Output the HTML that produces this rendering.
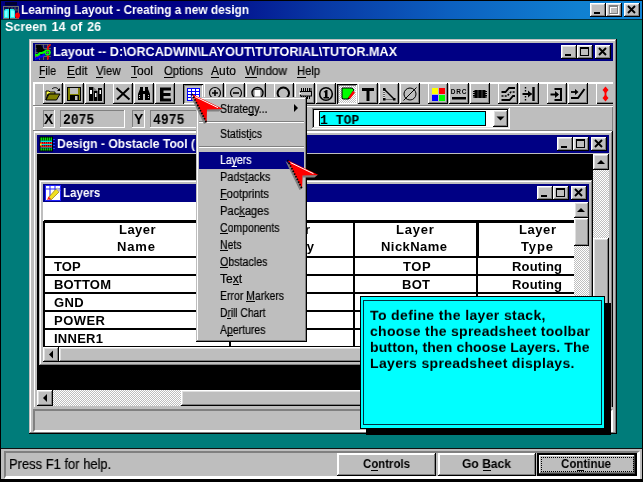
<!DOCTYPE html>
<html><head><meta charset="utf-8"><title>Learning Layout - Creating a new design</title>
<style>
html,body{margin:0;padding:0;background:#007c7a;}
body{width:643px;height:482px;overflow:hidden;font-family:"Liberation Sans",sans-serif;}
#root{position:relative;width:643px;height:482px;overflow:hidden;background:#007c7a;}
.a{position:absolute;box-sizing:border-box;}
.t{will-change:transform;position:absolute;white-space:pre;transform-origin:0 0;font-family:"Liberation Sans",sans-serif;}
.g{background:#bebebe;}
.rs{box-shadow:inset -1px -1px #000,inset 1px 1px #fff,inset -2px -2px #808080,inset 2px 2px #dfdfdf;background:#bebebe;}
.r1{box-shadow:inset -1px -1px #808080,inset 1px 1px #fff;background:#bebebe;}
.rb{box-shadow:inset -1px -1px #000,inset 1px 1px #fff,inset -2px -2px #808080;background:#bebebe;}
.sk{box-shadow:inset -1px -1px #fff,inset 1px 1px #808080,inset -2px -2px #dfdfdf,inset 2px 2px #000;}
.s1{box-shadow:inset -1px -1px #fff,inset 1px 1px #808080;}
.win{box-shadow:inset -1px -1px #000,inset 1px 1px #bebebe,inset -2px -2px #808080,inset 2px 2px #fff;background:#bebebe;}
.nv{background:#000084;}
.chk{background-image:conic-gradient(#fff 25%,#bebebe 0 50%,#fff 0 75%,#bebebe 0);background-size:2px 2px;}
u{text-decoration:underline;text-underline-offset:1px;}
svg{position:absolute;overflow:visible;}

</style></head>
<body>
<div id="root">
<div class="a " style="left:0px;top:0px;width:643px;height:482px;background:#007c7a;"></div>
<div class="a " style="left:0px;top:0px;width:643px;height:1px;background:#000;"></div>
<div class="a " style="left:0px;top:0px;width:1px;height:482px;background:#000;"></div>
<div class="a " style="left:1px;top:1px;width:641px;height:18px;background:linear-gradient(90deg,#000084 0%,#000084 28%,#0838a4 50%,#0c60c0 70%,#1080d0 90%,#1084d4 100%);"></div>
<div class="a " style="left:1px;top:19px;width:641px;height:1px;background:#003038;"></div>
<div class="a " style="left:642px;top:0px;width:1px;height:482px;background:#000;"></div>
<svg style="left:3px;top:2px" width="17" height="17" viewBox="0 0 17 17">
<rect x="2" y="0" width="12" height="3.500" fill="#000030"/>
<rect x="0.500" y="4.500" width="15" height="12" fill="#101058" stroke="#707070"/>
<path d="M6 4.500v3M9 4.500v3M12 4.500v4M12 8h3.500" stroke="#606060" stroke-width="0.800" fill="none"/>
<rect x="6" y="6" width="1" height="11" fill="#000"/>
<path d="M1 8.500l1.500-1.500h3.500v9h-5z" fill="#20f0f0"/><path d="M7 7h3.500l1.500 1.500v7.500h-5z" fill="#20f0f0"/>
<path d="M2 9.500l1-1h1.500v6.500h-2.500zM8 8.500h2l1 1v5.500h-3z" fill="#80ffff"/>
<path d="M12 13.500c0-2 1-3 2.500-3s2.500 1 2.500 3-1.500 3-2.500 3-2.500-1-2.500-3z" fill="#ff0000"/>
</svg>
<span id="t0" class="t" style="left:21.45px;top:1.00px;font-size:13px;line-height:17px;font-weight:bold;color:#fff;transform:scale(0.9096,1.0000);">Learning Layout - Creating a new design</span>
<div class="a rs" style="left:590px;top:3px;width:16px;height:14px;"></div>
<div class="a " style="left:594px;top:12px;width:6px;height:2px;background:#000;"></div>
<div class="a rs" style="left:606px;top:3px;width:16px;height:14px;"></div>
<div class="a " style="left:610px;top:6px;width:9px;height:9px;border:1px solid #fff;border-top:2px solid #fff;"></div>
<div class="a " style="left:609px;top:5px;width:9px;height:9px;border:1px solid #808080;border-top:2px solid #808080;"></div>
<div class="a rs" style="left:624px;top:3px;width:16px;height:14px;"></div>
<svg style="left:0;top:0" width="1" height="1"><path d="M628.0 6.0L635.0 13.0M635.0 6.0L628.0 13.0" stroke="#000" stroke-width="1.9" fill="none"/></svg>
<span id="t1" class="t" style="left:5.42px;top:18.00px;font-size:13px;line-height:17px;font-weight:bold;color:#fff;transform:scale(0.9611,1.0000);word-spacing:1.5px;">Screen 14 of 26</span>
<div class="a " style="left:1px;top:448px;width:641px;height:1px;background:#101010;"></div>
<div class="a g" style="left:1px;top:449px;width:641px;height:30px;"></div>
<div class="a " style="left:4px;top:451px;width:636px;height:28px;border-top:2px solid #808080;border-left:2px solid #808080;border-bottom:3px solid #fff;border-right:3px solid #fff;"></div>
<div class="a " style="left:1px;top:479px;width:642px;height:3px;background:#000;"></div>
<span id="t2" class="t" style="left:9.25px;top:454.75px;font-size:14px;line-height:18px;-webkit-text-stroke:0.2px #000;color:#000;transform:scale(0.9249,1.0000);">Press F1 for help.</span>
<div class="a g" style="left:337px;top:453px;width:99px;height:23px;box-shadow:inset -1px -1px #000,inset 1px 1px #fff,inset -2px -2px #808080,inset 2px 2px #fff;"></div>
<div class="a g" style="left:438px;top:453px;width:98px;height:23px;box-shadow:inset -1px -1px #000,inset 1px 1px #fff,inset -2px -2px #808080,inset 2px 2px #fff;"></div>
<div class="a " style="left:537px;top:453px;width:100px;height:23px;background:#000;"></div>
<div class="a g" style="left:539px;top:455px;width:96px;height:19px;box-shadow:inset -1px -1px #404040,inset 1px 1px #fff,inset -2px -2px #808080;"></div>
<div class="a " style="left:541px;top:457px;width:93px;height:15px;border:1px dotted #000;"></div>
<span id="t3" class="t" style="left:362.97px;top:454.50px;font-size:13px;line-height:17px;font-weight:bold;color:#000;transform:scale(0.8793,1.0000);">Controls</span>
<div class="a" style="left:371.22px;top:470px;width:7.01px;height:1px;background:#000;"></div>
<span id="t4" class="t" style="left:462.44px;top:454.50px;font-size:13px;line-height:17px;font-weight:bold;color:#000;transform:scale(0.9289,1.0000);">Go Back</span>
<div class="a" style="left:482.56px;top:470px;width:8.74px;height:1px;background:#000;"></div>
<span id="t5" class="t" style="left:561.47px;top:454.50px;font-size:13px;line-height:17px;font-weight:bold;color:#000;transform:scale(0.8877,1.0000);">Continue</span>
<div class="a" style="left:576.85px;top:470px;width:7.06px;height:1px;background:#000;"></div>
<div class="a win" style="left:29px;top:39px;width:588px;height:395px;"></div>
<div class="a nv" style="left:33px;top:43px;width:580px;height:18px;"></div>
<svg style="left:35px;top:44px" width="16" height="16" viewBox="0 0 16 16">
<rect width="16" height="16" fill="#101060"/>
<path d="M0.500 0v16M4.500 0v16M8.500 0v16M12.500 0v16M0 0.500h16M0 4.500h16M0 8.500h16M0 12.500h16" stroke="#707070" stroke-width="0.800"/>
<path d="M1 1h5l2 3 2.500 3.500-4 3-4.500-2.500z" fill="#000"/>
<path d="M0 11h3l2-2h2l3.500-1.500" stroke="#00ff00" stroke-width="2" fill="none"/>
<circle cx="12.500" cy="8.500" r="2.400" fill="none" stroke="#00ff00" stroke-width="1.600"/>
<path d="M0 15l3-1 2-1.500h2l3-2.500" stroke="#0000ff" stroke-width="2" fill="none"/>
<path d="M15.500 0.500l-2.500 2.500v3M13 11.500v4" stroke="#ff0000" stroke-width="1.600" fill="none"/>
</svg>
<span id="t6" class="t" style="left:53.42px;top:43.00px;font-size:13px;line-height:17px;font-weight:bold;color:#fff;transform:scale(0.9708,1.0000);">Layout -- D:\ORCADWIN\LAYOUT\TUTORIAL\TUTOR.MAX</span>
<div class="a rs" style="left:561px;top:45px;width:16px;height:14px;"></div>
<div class="a " style="left:565px;top:54px;width:6px;height:2px;background:#000;"></div>
<div class="a rs" style="left:577px;top:45px;width:16px;height:14px;"></div>
<div class="a " style="left:580px;top:47px;width:9px;height:9px;border:1px solid #000;border-top:2px solid #000;"></div>
<div class="a rs" style="left:595px;top:45px;width:16px;height:14px;"></div>
<svg style="left:0;top:0" width="1" height="1"><path d="M599.0 48.0L606.0 55.0M606.0 48.0L599.0 55.0" stroke="#000" stroke-width="1.9" fill="none"/></svg>
<span id="t7" class="t" style="left:38.97px;top:62.84px;font-size:12px;line-height:16px;-webkit-text-stroke:0.2px #000;color:#000;transform:scale(0.8788,1.0000);">File</span>
<div class="a" style="left:38.97px;top:77px;width:6.45px;height:1px;background:#000;"></div>
<span id="t8" class="t" style="left:66.91px;top:62.84px;font-size:12px;line-height:16px;-webkit-text-stroke:0.2px #000;color:#000;transform:scale(0.9909,1.0000);">Edit</span>
<div class="a" style="left:66.91px;top:77px;width:7.94px;height:1px;background:#000;"></div>
<span id="t9" class="t" style="left:95.93px;top:62.84px;font-size:12px;line-height:16px;-webkit-text-stroke:0.2px #000;color:#000;transform:scale(0.9497,1.0000);">View</span>
<div class="a" style="left:95.93px;top:77px;width:7.40px;height:1px;background:#000;"></div>
<span id="t10" class="t" style="left:130.90px;top:62.84px;font-size:12px;line-height:16px;-webkit-text-stroke:0.2px #000;color:#000;transform:scale(0.9993,1.0000);">Tool</span>
<div class="a" style="left:130.90px;top:77px;width:6.00px;height:1px;background:#000;"></div>
<span id="t11" class="t" style="left:164.43px;top:62.84px;font-size:12px;line-height:16px;-webkit-text-stroke:0.2px #000;color:#000;transform:scale(0.9430,1.0000);">Options</span>
<div class="a" style="left:164.43px;top:77px;width:8.81px;height:1px;background:#000;"></div>
<span id="t12" class="t" style="left:211.40px;top:62.84px;font-size:12px;line-height:16px;-webkit-text-stroke:0.2px #000;color:#000;letter-spacing:0.104px;">Auto</span>
<div class="a" style="left:211.40px;top:77px;width:8.02px;height:1px;background:#000;"></div>
<span id="t13" class="t" style="left:245.41px;top:62.84px;font-size:12px;line-height:16px;-webkit-text-stroke:0.2px #000;color:#000;transform:scale(0.9839,1.0000);">Window</span>
<div class="a" style="left:245.41px;top:77px;width:11.15px;height:1px;background:#000;"></div>
<span id="t14" class="t" style="left:297.44px;top:62.84px;font-size:12px;line-height:16px;-webkit-text-stroke:0.2px #000;color:#000;transform:scale(0.9316,1.0000);">Help</span>
<div class="a" style="left:297.44px;top:77px;width:8.08px;height:1px;background:#000;"></div>
<div class="a " style="left:33px;top:82px;width:580px;height:2px;background:#fff;"></div>
<div class="a " style="left:33px;top:105px;width:580px;height:1px;background:#808080;"></div>
<div class="a " style="left:33px;top:106px;width:580px;height:1px;background:#fff;"></div>
<div class="a " style="left:33px;top:82px;width:2px;height:23px;background:#fff;"></div>
<div class="a " style="left:33px;top:106px;width:2px;height:24px;background:#fff;"></div>
<div class="a " style="left:612px;top:107px;width:1px;height:23px;background:#808080;"></div>
<div class="a rb" style="left:43px;top:83px;width:20px;height:21px;"></div>
<div class="a rb" style="left:64px;top:83px;width:20px;height:21px;"></div>
<div class="a rb" style="left:85px;top:83px;width:20px;height:21px;"></div>
<div class="a rb" style="left:113px;top:83px;width:20px;height:21px;"></div>
<div class="a rb" style="left:134px;top:83px;width:20px;height:21px;"></div>
<div class="a rb" style="left:155px;top:83px;width:20px;height:21px;"></div>
<div class="a g" style="left:183px;top:84px;width:20px;height:20px;box-shadow:inset 1px 1px #000,inset -1px -1px #fff,inset 2px 2px #808080;"></div>
<div class="a rb" style="left:204px;top:83px;width:20px;height:21px;"></div>
<div class="a rb" style="left:225px;top:83px;width:20px;height:21px;"></div>
<div class="a rb" style="left:246px;top:83px;width:20px;height:21px;"></div>
<div class="a rb" style="left:274px;top:83px;width:20px;height:21px;"></div>
<div class="a rb" style="left:295px;top:83px;width:20px;height:21px;"></div>
<div class="a rb" style="left:316px;top:83px;width:20px;height:21px;"></div>
<div class="a chk" style="left:337px;top:84px;width:20px;height:20px;box-shadow:inset 1px 1px #000,inset -1px -1px #fff,inset 2px 2px #808080;"></div>
<div class="a rb" style="left:358px;top:83px;width:20px;height:21px;"></div>
<div class="a rb" style="left:379px;top:83px;width:20px;height:21px;"></div>
<div class="a rb" style="left:400px;top:83px;width:20px;height:21px;"></div>
<div class="a rb" style="left:428px;top:83px;width:20px;height:21px;"></div>
<div class="a rb" style="left:449px;top:83px;width:20px;height:21px;"></div>
<div class="a rb" style="left:470px;top:83px;width:20px;height:21px;"></div>
<div class="a rb" style="left:498px;top:83px;width:20px;height:21px;"></div>
<div class="a rb" style="left:519px;top:83px;width:20px;height:21px;"></div>
<div class="a rb" style="left:547px;top:83px;width:20px;height:21px;"></div>
<div class="a rb" style="left:568px;top:83px;width:20px;height:21px;"></div>
<div class="a g" style="left:596px;top:83px;width:17px;height:21px;box-shadow:inset 1px 1px #fff,inset 0 -1px #000,inset 0 -2px #808080;"></div>
<svg style="left:43px;top:84px" width="20" height="20" viewBox="0 0 20 20"><path d="M3 7h3l1 1h5v2h-7l-2 6z" fill="#ffff40" stroke="#000" stroke-width="1"/>
<path d="M3 16l3-6h11l-3.500 6z" fill="#808000" stroke="#000" stroke-width="1"/>
<path d="M9 5c2-2 5-2 7 1" stroke="#000" stroke-width="1" fill="none"/><path d="M17 4v3h-3z" fill="#000"/></svg>
<svg style="left:64px;top:84px" width="20" height="20" viewBox="0 0 20 20"><rect x="3.500" y="3.500" width="13" height="13" fill="#808000" stroke="#000"/>
<rect x="6" y="4" width="8" height="6" fill="#bebebe"/>
<rect x="6" y="11" width="9" height="5.500" fill="#000"/>
<rect x="11" y="12" width="2.500" height="4" fill="#bebebe"/></svg>
<svg style="left:85px;top:84px" width="20" height="20" viewBox="0 0 20 20"><rect x="4" y="3" width="4.500" height="14" fill="#000"/><rect x="9" y="7" width="3.500" height="10" fill="#000"/><rect x="13" y="4" width="4" height="13" fill="#000"/>
<path d="M8.500 3l4 4h-4z" fill="#808080"/>
<rect x="5" y="6" width="2" height="4" fill="#fff"/><rect x="10" y="9" width="1.500" height="4" fill="#fff"/><rect x="14.500" y="6" width="1.500" height="4" fill="#fff"/></svg>
<svg style="left:113px;top:84px" width="20" height="20" viewBox="0 0 20 20"><path d="M3.500 4L16.500 15.500M16 4L4 15.500" stroke="#000" stroke-width="2" fill="none"/></svg>
<svg style="left:134px;top:84px" width="20" height="20" viewBox="0 0 20 20"><path d="M4 16v-6l2-5v-2h3v4h2v-4h3v2l2 5v6h-5v-6h-2v6z" fill="#000"/>
<path d="M5.500 11v4M14.500 11v4" stroke="#fff" stroke-width="0.800" stroke-dasharray="1 1"/></svg>
<svg style="left:155px;top:84px" width="20" height="20" viewBox="0 0 20 20"><path d="M5 3.500h11v3h-7.500v2.500h7v3h-7v2.500h7.500v3h-11z" fill="#000"/></svg>
<svg style="left:183px;top:84px" width="20" height="20" viewBox="0 0 20 20"><rect x="4" y="4" width="13" height="13" fill="#0000ff"/>
<g fill="#fff"><rect x="5" y="5" width="3" height="2"/><rect x="9" y="5" width="3" height="2"/><rect x="13" y="5" width="3" height="2"/>
<rect x="5" y="8" width="3" height="2"/><rect x="9" y="8" width="3" height="2"/><rect x="13" y="8" width="3" height="2"/>
<rect x="5" y="11" width="3" height="2"/><rect x="9" y="11" width="3" height="2"/><rect x="13" y="11" width="3" height="2"/>
<rect x="5" y="14" width="3" height="2"/><rect x="9" y="14" width="3" height="2"/><rect x="13" y="14" width="3" height="2"/></g></svg>
<svg style="left:204px;top:84px" width="20" height="20" viewBox="0 0 20 20"><circle cx="11" cy="9" r="5.500" fill="none" stroke="#000" stroke-width="1.200"/><path d="M8 9h6M11 6v6" stroke="#000" stroke-width="1.600"/></svg>
<svg style="left:225px;top:84px" width="20" height="20" viewBox="0 0 20 20"><circle cx="11" cy="9" r="5.500" fill="none" stroke="#000" stroke-width="1.200"/><path d="M8 9h6" stroke="#000" stroke-width="1.600"/></svg>
<svg style="left:246px;top:84px" width="20" height="20" viewBox="0 0 20 20"><circle cx="11.500" cy="9" r="5.500" fill="none" stroke="#000" stroke-width="1.400"/><rect x="8" y="5.500" width="7" height="7.500" fill="#fff" stroke="#000" stroke-width="0.600"/></svg>
<svg style="left:274px;top:84px" width="20" height="20" viewBox="0 0 20 20"><path d="M5.800 13.800a5.700 5.700 0 1 1 7 0" fill="none" stroke="#000" stroke-width="2"/></svg>
<svg style="left:295px;top:84px" width="20" height="20" viewBox="0 0 20 20"><rect x="5.500" y="7.500" width="11" height="4.500" fill="#bebebe" stroke="#000"/>
<path d="M6.500 4v3M8.500 4v3M10.500 4v3M12.500 4v3M14.500 4v3M16 4v3M6.500 12v3M8.500 12v3M10.500 12v3M12.500 12v3M14.500 12v3" stroke="#000" stroke-width="1"/>
<rect x="4" y="8.500" width="2" height="2" fill="#fff"/></svg>
<svg style="left:316px;top:84px" width="20" height="20" viewBox="0 0 20 20"><circle cx="10" cy="10" r="6.300" fill="none" stroke="#000" stroke-width="1.600"/>
<path d="M7.500 8l2.500-2h1.500v7h1.500v1.500h-5.500v-1.500h1.500v-4.500z" fill="#000"/></svg>
<svg style="left:337px;top:84px" width="20" height="20" viewBox="0 0 20 20"><path d="M5 4h10l2 2l-6 9h-5l-1-1z" fill="#00ff00" stroke="#000" stroke-width="1"/>
<path d="M11 14l5-7 2 1.500-5 6.500z" fill="#ff0000"/><path d="M10.500 15.500l1-2 1.500 1.200z" fill="#000"/></svg>
<svg style="left:358px;top:84px" width="20" height="20" viewBox="0 0 20 20"><path d="M4 4h12v3h-4.500v10h-3v-10h-4.500z" fill="#000"/></svg>
<svg style="left:379px;top:84px" width="20" height="20" viewBox="0 0 20 20"><path d="M5 5L15.500 15.500" stroke="#000" stroke-width="1.400"/><path d="M5 5v10.500h10.500" stroke="#fff" stroke-width="1" stroke-dasharray="1 1" fill="none"/>
<path d="M5 5v10.500h10.500" stroke="#000" stroke-width="1" stroke-dasharray="1 1" stroke-dashoffset="1" fill="none"/>
<rect x="4" y="4" width="2.500" height="2.500" fill="#000"/><rect x="4" y="14" width="2.500" height="2.500" fill="#000"/><rect x="14" y="14" width="2.500" height="2.500" fill="#000"/></svg>
<svg style="left:400px;top:84px" width="20" height="20" viewBox="0 0 20 20"><circle cx="10" cy="10" r="6" fill="none" stroke="#000" stroke-width="1"/><path d="M3.500 16.500L16.500 3.500" stroke="#000" stroke-width="1"/></svg>
<svg style="left:428px;top:84px" width="20" height="20" viewBox="0 0 20 20"><rect x="4" y="4" width="6" height="6" fill="#ffff00"/><rect x="11" y="4" width="6" height="6" fill="#ff0000"/><rect x="4" y="11" width="6" height="6" fill="#0000ff"/><rect x="11" y="11" width="6" height="6" fill="#00ff00"/></svg>
<svg style="left:449px;top:84px" width="20" height="20" viewBox="0 0 20 20"><text x="10" y="10" font-family="Liberation Sans,sans-serif" font-size="6.500" font-weight="bold" text-anchor="middle" letter-spacing="0.800" fill="#000">DRC</text><rect x="3" y="13" width="14" height="2.500" fill="#000"/></svg>
<svg style="left:470px;top:84px" width="20" height="20" viewBox="0 0 20 20"><rect x="4.500" y="6" width="11" height="8" fill="#000"/><path d="M3 7.500h14M3 9.500h14M3 11.500h14M3 13h14" stroke="#000" stroke-width="1"/>
<path d="M8 6v8M12 6v8" stroke="#808080" stroke-width="0.600"/></svg>
<svg style="left:498px;top:84px" width="20" height="20" viewBox="0 0 20 20"><path d="M3.500 8h4l3.500-4h6" fill="none" stroke="#000" stroke-width="1.800"/>
<path d="M3.500 12h5.500l4-4h4" fill="none" stroke="#000" stroke-width="1.600" stroke-dasharray="2 1.200"/>
<path d="M3.500 16h8l3.500-4h2" fill="none" stroke="#000" stroke-width="1.800"/></svg>
<svg style="left:519px;top:84px" width="20" height="20" viewBox="0 0 20 20"><path d="M14.500 3v14" stroke="#000" stroke-width="2.400"/><path d="M6.500 3v14" stroke="#000" stroke-width="1.400" stroke-dasharray="1.500 1.500"/>
<path d="M3.500 10h9" stroke="#000" stroke-width="2"/><path d="M9 6.500l4 3.500-4 3.500z" fill="#000"/></svg>
<svg style="left:547px;top:84px" width="20" height="20" viewBox="0 0 20 20"><path d="M7.500 5h6.500v11h-6.500" fill="none" stroke="#000" stroke-width="2"/>
<path d="M3.500 10.500h7" stroke="#000" stroke-width="2"/><path d="M8 7l4 3.500-4 3.500z" fill="#000"/></svg>
<svg style="left:568px;top:84px" width="20" height="20" viewBox="0 0 20 20"><path d="M3 8h6" stroke="#000" stroke-width="1.800"/><path d="M7 5l3.500 3-3.500 3z" fill="#000"/>
<path d="M3 14h7l6.500-9" fill="none" stroke="#000" stroke-width="2"/></svg>
<svg style="left:596px;top:84px" width="17" height="20" viewBox="0 0 17 20"><path d="M9.500 5v10" stroke="#ff0000" stroke-width="1.800"/><path d="M9.500 2.500l3 3.500-3 3.500-3-3.500z" fill="#ff0000"/><path d="M9.500 10.500l3 3.500-3 3.500-3-3.500z" fill="#ff0000"/></svg>
<div class="a s1" style="left:43px;top:110px;width:12px;height:18px;"></div>
<span id="t15" class="t" style="left:44.00px;top:110.15px;font-size:14px;line-height:18px;font-weight:bold;color:#000;letter-spacing:0.956px;">X</span>
<div class="a s1" style="left:60px;top:110px;width:65px;height:18px;"></div>
<span id="t16" class="t" style="left:63.21px;top:110.93px;font-size:13.33px;line-height:17.33px;font-weight:bold;color:#000;transform:scale(0.9750,1.0700);font-family:'Liberation Mono',monospace;">2075</span>
<div class="a s1" style="left:132px;top:110px;width:13px;height:18px;"></div>
<span id="t17" class="t" style="left:134.00px;top:110.15px;font-size:14px;line-height:18px;font-weight:bold;color:#000;letter-spacing:1.556px;">Y</span>
<div class="a s1" style="left:150px;top:110px;width:65px;height:18px;"></div>
<span id="t18" class="t" style="left:153.01px;top:110.93px;font-size:13.33px;line-height:17.33px;font-weight:bold;color:#000;transform:scale(0.9813,1.0700);font-family:'Liberation Mono',monospace;">4975</span>
<div class="a sk" style="left:312px;top:108px;width:198px;height:21px;background:#fff;"></div>
<div class="a " style="left:319px;top:111px;width:167px;height:15px;background:#00ffff;border:1px solid #000;"></div>
<span id="t19" class="t" style="left:320.11px;top:111.58px;font-size:13.33px;line-height:17.33px;font-weight:bold;color:#000;transform:scale(0.9825,1.0000);font-family:'Liberation Mono',monospace;">1 TOP</span>
<div class="a rs" style="left:493px;top:110px;width:15px;height:17px;"></div>
<svg style="left:0;top:0" width="1" height="1"><path d="M496.5 116.5h8l-4 4z" fill="#000"/></svg>
<div class="a win" style="left:33px;top:131px;width:580px;height:282px;"></div>
<div class="a " style="left:33px;top:130px;width:580px;height:1px;background:#808080;"></div>
<div class="a " style="left:34px;top:131px;width:578px;height:1px;background:#fff;"></div>
<div class="a nv" style="left:37px;top:135px;width:572px;height:18px;"></div>
<svg style="left:39px;top:136px" width="16" height="16" viewBox="0 0 16 16">
<rect x="0.500" y="0.500" width="13.500" height="15" fill="#000"/>
<rect x="1.500" y="1.500" width="11.500" height="3" fill="#00e000"/>
<rect x="1.500" y="4.500" width="11.500" height="2" fill="#00e0e0"/>
<rect x="1.500" y="6" width="11.500" height="2" fill="#ff2020"/>
<rect x="1.500" y="8" width="11.500" height="1.500" fill="#00e0e0"/>
<rect x="1.500" y="9.500" width="11.500" height="2" fill="#ff2020"/>
<rect x="1.500" y="11.500" width="11.500" height="1" fill="#00e0e0"/>
<rect x="1.500" y="12.500" width="11.500" height="2" fill="#00e000"/>
<path d="M3.500 1v14M5.500 1v14M7.500 1v14M9.500 1v14M11.500 1v14" stroke="#000" stroke-width="0.600" stroke-dasharray="3.500 1.500 1.500 1.500 1.500 1.500 3"/>
<path d="M14 3.500h2M14 6.500h2M14 9.500h2M14 12.500h2" stroke="#2040ff" stroke-width="1"/>
<rect x="1" y="7.500" width="1.500" height="2" fill="#ffff00"/>
</svg>
<span id="t20" class="t" style="left:57.44px;top:134.50px;font-size:13px;line-height:17px;font-weight:bold;color:#fff;transform:scale(0.9334,1.0000);">Design - Obstacle Tool (</span>
<div class="a rs" style="left:557px;top:137px;width:16px;height:14px;"></div>
<div class="a " style="left:561px;top:146px;width:6px;height:2px;background:#000;"></div>
<div class="a rs" style="left:573px;top:137px;width:16px;height:14px;"></div>
<div class="a " style="left:576px;top:139px;width:9px;height:9px;border:1px solid #000;border-top:2px solid #000;"></div>
<div class="a rs" style="left:591px;top:137px;width:16px;height:14px;"></div>
<svg style="left:0;top:0" width="1" height="1"><path d="M595.0 140.0L602.0 147.0M602.0 140.0L595.0 147.0" stroke="#000" stroke-width="1.9" fill="none"/></svg>
<div class="a " style="left:37px;top:154px;width:556px;height:236px;background:#000;"></div>
<div class="a chk" style="left:593px;top:154px;width:16px;height:236px;"></div>
<div class="a rs" style="left:593px;top:154px;width:16px;height:16px;"></div>
<svg style="left:0;top:0" width="1" height="1"><path d="M597 164h8l-4-4z" fill="#000"/></svg>
<div class="a rs" style="left:593px;top:238px;width:16px;height:152px;"></div>
<div class="a g" style="left:37px;top:390px;width:572px;height:16px;"></div>
<div class="a rs" style="left:37px;top:390px;width:16px;height:16px;"></div>
<svg style="left:0;top:0" width="1" height="1"><path d="M47 394v8l-4-4z" fill="#000"/></svg>
<div class="a chk" style="left:53px;top:390px;width:128px;height:16px;"></div>
<div class="a rs" style="left:181px;top:390px;width:412px;height:16px;"></div>
<div class="a g" style="left:33px;top:409px;width:580px;height:23px;border-top:2px solid #808080;border-left:2px solid #808080;border-bottom:2px solid #fff;border-right:2px solid #fff;"></div>
<div class="a g" style="left:33px;top:407px;width:580px;height:2px;"></div>
<div class="a win" style="left:39px;top:180px;width:554px;height:186px;"></div>
<div class="a nv" style="left:43px;top:184px;width:546px;height:18px;"></div>
<svg style="left:45px;top:185px" width="16" height="16" viewBox="0 0 16 16">
<rect width="15" height="15" fill="#fff" stroke="#2020ff" stroke-width="1" x="0.5" y="0.5"/>
<path d="M0 4h16M5 0v16M10 0v5" stroke="#2020ff" stroke-width="1"/>
<path d="M3 13 L11 4 L14 7 L6 15z" fill="#f0e020" stroke="#806000" stroke-width="0.6"/>
<path d="M2 15l1.5-3.5 2.5 2.5z" fill="#f02020"/>
<path d="M11 4l1.5-1.5 3 3L14 7z" fill="#bebebe"/>
</svg>
<span id="t21" class="t" style="left:63.22px;top:184.00px;font-size:13px;line-height:17px;font-weight:bold;color:#fff;transform:scale(0.8886,1.0000);">Layers</span>
<div class="a rs" style="left:537px;top:186px;width:16px;height:14px;"></div>
<div class="a " style="left:541px;top:195px;width:6px;height:2px;background:#000;"></div>
<div class="a rs" style="left:553px;top:186px;width:16px;height:14px;"></div>
<div class="a " style="left:556px;top:188px;width:9px;height:9px;border:1px solid #000;border-top:2px solid #000;"></div>
<div class="a rs" style="left:571px;top:186px;width:16px;height:14px;"></div>
<svg style="left:0;top:0" width="1" height="1"><path d="M575.0 189.0L582.0 196.0M582.0 189.0L575.0 196.0" stroke="#000" stroke-width="1.9" fill="none"/></svg>
<div class="a " style="left:43px;top:202px;width:531px;height:145px;background:#fff;"></div>
<div class="a " style="left:44px;top:220px;width:530px;height:3px;background:#000;"></div>
<div class="a " style="left:43px;top:221px;width:2px;height:126px;background:#000;"></div>
<div class="a " style="left:44px;top:256px;width:530px;height:2px;background:#000;"></div>
<div class="a " style="left:44px;top:274px;width:530px;height:2px;background:#000;"></div>
<div class="a " style="left:44px;top:292px;width:530px;height:2px;background:#000;"></div>
<div class="a " style="left:44px;top:310px;width:530px;height:2px;background:#000;"></div>
<div class="a " style="left:44px;top:328px;width:530px;height:2px;background:#000;"></div>
<div class="a " style="left:44px;top:346px;width:530px;height:1px;background:#000;"></div>
<div class="a " style="left:229px;top:221px;width:3px;height:37px;background:#000;"></div>
<div class="a " style="left:229px;top:256px;width:2px;height:91px;background:#000;"></div>
<div class="a " style="left:352.5px;top:221px;width:2.5px;height:37px;background:#000;"></div>
<div class="a " style="left:352.5px;top:256px;width:2px;height:91px;background:#000;"></div>
<div class="a " style="left:476px;top:221px;width:3px;height:37px;background:#000;"></div>
<div class="a " style="left:476px;top:256px;width:2px;height:91px;background:#000;"></div>
<span id="t22" class="t" style="left:118.90px;top:220.75px;font-size:13px;line-height:17px;font-weight:bold;color:#000;letter-spacing:0.449px;">Layer</span>
<span id="t23" class="t" style="left:117.40px;top:238.00px;font-size:13px;line-height:17px;font-weight:bold;color:#000;letter-spacing:0.859px;">Name</span>
<span id="t24" class="t" style="left:396.40px;top:220.75px;font-size:13px;line-height:17px;font-weight:bold;color:#000;letter-spacing:0.762px;">Layer</span>
<span id="t25" class="t" style="left:381.40px;top:238.00px;font-size:13px;line-height:17px;font-weight:bold;color:#000;letter-spacing:0.446px;">NickName</span>
<span id="t26" class="t" style="left:519.40px;top:220.75px;font-size:13px;line-height:17px;font-weight:bold;color:#000;letter-spacing:0.574px;">Layer</span>
<span id="t27" class="t" style="left:521.40px;top:238.00px;font-size:13px;line-height:17px;font-weight:bold;color:#000;letter-spacing:0.870px;">Type</span>
<span id="t28" class="t" style="left:273.40px;top:220.75px;font-size:13px;line-height:17px;font-weight:bold;color:#000;letter-spacing:0.574px;">Layer</span>
<span id="t29" class="t" style="left:267.40px;top:238.00px;font-size:13px;line-height:17px;font-weight:bold;color:#000;letter-spacing:0.728px;">Hotkey</span>
<span id="t30" class="t" style="left:54.40px;top:257.50px;font-size:13px;line-height:17px;font-weight:bold;color:#000;letter-spacing:0.125px;">TOP</span>
<span id="t31" class="t" style="left:54.40px;top:275.50px;font-size:13px;line-height:17px;font-weight:bold;color:#000;letter-spacing:0.181px;">BOTTOM</span>
<span id="t32" class="t" style="left:54.40px;top:293.50px;font-size:13px;line-height:17px;font-weight:bold;color:#000;letter-spacing:0.430px;">GND</span>
<span id="t33" class="t" style="left:54.40px;top:311.50px;font-size:13px;line-height:17px;font-weight:bold;color:#000;letter-spacing:0.469px;">POWER</span>
<span id="t34" class="t" style="left:54.40px;top:329.50px;font-size:13px;line-height:17px;font-weight:bold;color:#000;letter-spacing:0.263px;">INNER1</span>
<span id="t35" class="t" style="left:403.15px;top:257.50px;font-size:13px;line-height:17px;font-weight:bold;color:#000;letter-spacing:0.625px;">TOP</span>
<span id="t36" class="t" style="left:402.40px;top:275.50px;font-size:13px;line-height:17px;font-weight:bold;color:#000;letter-spacing:0.273px;">BOT</span>
<span id="t37" class="t" style="left:512.40px;top:257.50px;font-size:13px;line-height:17px;font-weight:bold;color:#000;letter-spacing:0.151px;">Routing</span>
<span id="t38" class="t" style="left:512.40px;top:275.50px;font-size:13px;line-height:17px;font-weight:bold;color:#000;letter-spacing:0.151px;">Routing</span>
<div class="a chk" style="left:574px;top:202px;width:15px;height:145px;"></div>
<div class="a rs" style="left:574px;top:202px;width:15px;height:16px;"></div>
<svg style="left:0;top:0" width="1" height="1"><path d="M577 212h8l-4-4z" fill="#000"/></svg>
<div class="a rs" style="left:574px;top:218px;width:15px;height:28px;"></div>
<div class="a g" style="left:43px;top:347px;width:546px;height:15px;"></div>
<div class="a rs" style="left:43px;top:347px;width:16px;height:15px;"></div>
<svg style="left:0;top:0" width="1" height="1"><path d="M53 350.500v8l-4-4z" fill="#000"/></svg>
<div class="a rs" style="left:59px;top:347px;width:530px;height:15px;"></div>
<div class="a win" style="left:196px;top:97px;width:111px;height:245px;"></div>
<div class="a " style="left:199px;top:121px;width:105px;height:1px;background:#808080;"></div>
<div class="a " style="left:199px;top:122px;width:105px;height:1px;background:#fff;"></div>
<div class="a " style="left:199px;top:146px;width:105px;height:1px;background:#808080;"></div>
<div class="a " style="left:199px;top:147px;width:105px;height:1px;background:#fff;"></div>
<div class="a nv" style="left:199px;top:152px;width:105px;height:17px;"></div>
<span id="t39" class="t" style="left:219.97px;top:100.59px;font-size:12px;line-height:16px;-webkit-text-stroke:0.2px #000;color:#000;transform:scale(0.8827,1.0000);">Strategy...</span>
<div class="a" style="left:248.23px;top:114px;width:5.90px;height:1px;background:#000;"></div>
<span id="t40" class="t" style="left:219.98px;top:126.09px;font-size:12px;line-height:16px;-webkit-text-stroke:0.2px #000;color:#000;transform:scale(0.8747,1.0000);">Statistics</span>
<div class="a" style="left:249.14px;top:139px;width:2.34px;height:1px;background:#000;"></div>
<span id="t41" class="t" style="left:219.98px;top:152.34px;font-size:12px;line-height:16px;-webkit-text-stroke:0.2px #fff;color:#fff;transform:scale(0.8742,1.0000);">Layers</span>
<div class="a" style="left:231.64px;top:166px;width:5.26px;height:1px;background:#fff;"></div>
<span id="t42" class="t" style="left:219.95px;top:169.09px;font-size:12px;line-height:16px;-webkit-text-stroke:0.2px #000;color:#000;transform:scale(0.9122,1.0000);">Padstacks</span>
<div class="a" style="left:244.90px;top:182px;width:3.05px;height:1px;background:#000;"></div>
<span id="t43" class="t" style="left:219.95px;top:186.09px;font-size:12px;line-height:16px;-webkit-text-stroke:0.2px #000;color:#000;transform:scale(0.9183,1.0000);">Footprints</span>
<div class="a" style="left:219.95px;top:199px;width:6.74px;height:1px;background:#000;"></div>
<span id="t44" class="t" style="left:219.94px;top:203.09px;font-size:12px;line-height:16px;-webkit-text-stroke:0.2px #000;color:#000;transform:scale(0.9297,1.0000);">Packages</span>
<div class="a" style="left:239.16px;top:216px;width:5.59px;height:1px;background:#000;"></div>
<span id="t45" class="t" style="left:219.98px;top:220.09px;font-size:12px;line-height:16px;-webkit-text-stroke:0.2px #000;color:#000;transform:scale(0.8744,1.0000);">Components</span>
<div class="a" style="left:219.98px;top:233px;width:7.58px;height:1px;background:#000;"></div>
<span id="t46" class="t" style="left:219.98px;top:237.09px;font-size:12px;line-height:16px;-webkit-text-stroke:0.2px #000;color:#000;transform:scale(0.8709,1.0000);">Nets</span>
<div class="a" style="left:219.98px;top:250px;width:7.55px;height:1px;background:#000;"></div>
<span id="t47" class="t" style="left:219.97px;top:254.09px;font-size:12px;line-height:16px;-webkit-text-stroke:0.2px #000;color:#000;transform:scale(0.8902,1.0000);">Obstacles</span>
<div class="a" style="left:219.97px;top:267px;width:8.32px;height:1px;background:#000;"></div>
<span id="t48" class="t" style="left:219.90px;top:271.09px;font-size:12px;line-height:16px;-webkit-text-stroke:0.2px #000;color:#000;transform:scale(0.9993,1.0000);">Text</span>
<div class="a" style="left:232.56px;top:284px;width:6.01px;height:1px;background:#000;"></div>
<span id="t49" class="t" style="left:219.98px;top:288.09px;font-size:12px;line-height:16px;-webkit-text-stroke:0.2px #000;color:#000;transform:scale(0.8726,1.0000);">Error Markers</span>
<div class="a" style="left:246.15px;top:301px;width:8.73px;height:1px;background:#000;"></div>
<span id="t50" class="t" style="left:219.99px;top:305.09px;font-size:12px;line-height:16px;-webkit-text-stroke:0.2px #000;color:#000;transform:scale(0.8530,1.0000);">Drill Chart</span>
<div class="a" style="left:227.37px;top:318px;width:3.43px;height:1px;background:#000;"></div>
<span id="t51" class="t" style="left:219.98px;top:322.09px;font-size:12px;line-height:16px;-webkit-text-stroke:0.2px #000;color:#000;transform:scale(0.8745,1.0000);">Apertures</span>
<div class="a" style="left:226.97px;top:335px;width:5.85px;height:1px;background:#000;"></div>
<svg style="left:0;top:0" width="1" height="1"><path d="M294 104v8l4-4z" fill="#000"/></svg>
<div class="a " style="left:366px;top:303px;width:245px;height:132px;background:#000;"></div>
<div class="a " style="left:360px;top:296px;width:245px;height:133px;background:#00ffff;border:1px solid #000;"></div>
<div class="a " style="left:363px;top:300px;width:239px;height:125px;border:1px solid #003040;"></div>
<span id="t52" class="t" style="left:369.90px;top:307.12px;font-size:14px;line-height:18px;font-weight:bold;color:#000;letter-spacing:0.370px;transform:scale(1.0000,0.9300);">To define the layer stack,</span>
<span id="t53" class="t" style="left:369.90px;top:323.12px;font-size:14px;line-height:18px;font-weight:bold;color:#000;letter-spacing:0.289px;transform:scale(1.0000,0.9300);">choose the spreadsheet toolbar</span>
<span id="t54" class="t" style="left:369.90px;top:339.12px;font-size:14px;line-height:18px;font-weight:bold;color:#000;letter-spacing:0.134px;transform:scale(1.0000,0.9300);">button, then choose Layers. The</span>
<span id="t55" class="t" style="left:369.90px;top:355.12px;font-size:14px;line-height:18px;font-weight:bold;color:#000;letter-spacing:0.340px;transform:scale(1.0000,0.9300);">Layers spreadsheet displays.</span>
<svg style="left:0;top:0" width="1" height="1">
<path d="M190 95 L204 124 L206.5 122.7 L207 110 Z" fill="#808080"/>
<path d="M207 109 L222 109 L219 111.5 L207 111.5 Z" fill="#808080"/>
<path d="M192 94 L223 109 L207 109.5 L206.5 122.7 Z" fill="#ff0000"/>
<path d="M192 94 L206.5 122.7" stroke="#000" stroke-width="1.8" stroke-dasharray="1.5 1.5" fill="none"/>
<path d="M195 96.6 L218 107.7" stroke="#fff" stroke-width="1" fill="none"/>
</svg>
<svg style="left:0;top:0" width="1" height="1">
<path d="M285.5 161 L299.5 190 L302.0 188.7 L302.5 176 Z" fill="#808080"/>
<path d="M302.5 175 L317.5 175 L314.5 177.5 L302.5 177.5 Z" fill="#808080"/>
<path d="M287.5 160 L318.5 175 L302.5 175.5 L302.0 188.7 Z" fill="#ff0000"/>
<path d="M287.5 160 L302.0 188.7" stroke="#000" stroke-width="1.8" stroke-dasharray="1.5 1.5" fill="none"/>
<path d="M290.5 162.6 L313.5 173.7" stroke="#fff" stroke-width="1" fill="none"/>
</svg>
</div>
</body></html>
